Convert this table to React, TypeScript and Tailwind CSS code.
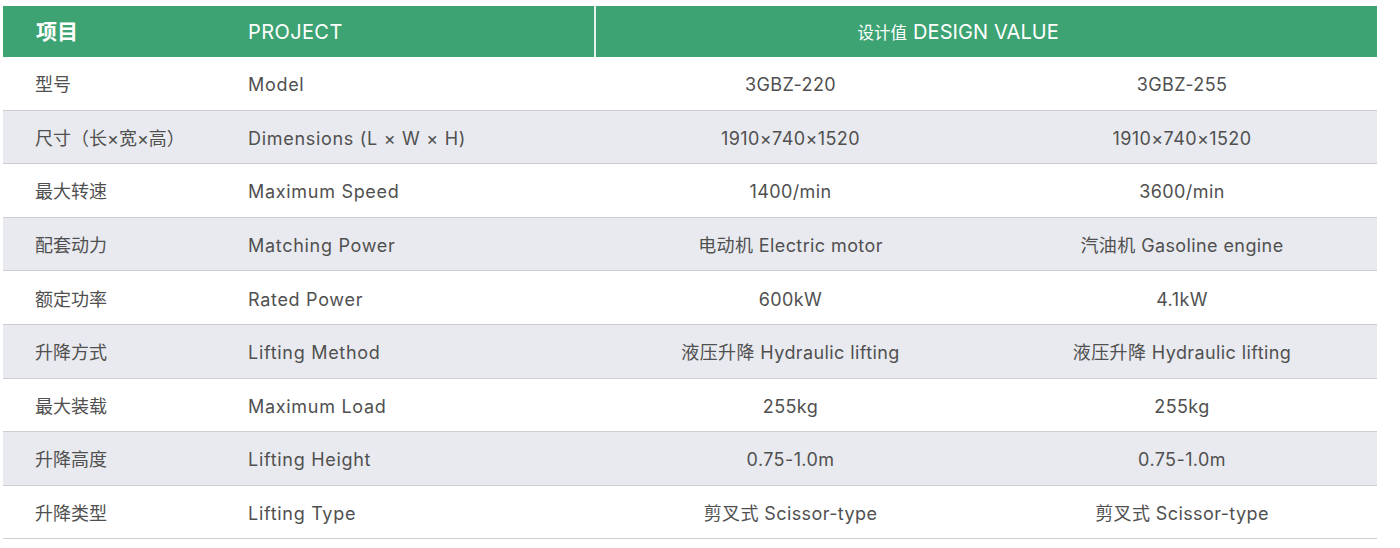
import React from "react";

const rows: [string, string, string, string][] = [
  ["型号", "Model", "3GBZ-220", "3GBZ-255"],
  ["尺寸（长×宽×高）", "Dimensions (L × W × H)", "1910×740×1520", "1910×740×1520"],
  ["最大转速", "Maximum Speed", "1400/min", "3600/min"],
  ["配套动力", "Matching Power", "电动机 Electric motor", "汽油机 Gasoline engine"],
  ["额定功率", "Rated Power", "600kW", "4.1kW"],
  ["升降方式", "Lifting Method", "液压升降 Hydraulic lifting", "液压升降 Hydraulic lifting"],
  ["最大装载", "Maximum Load", "255kg", "255kg"],
  ["升降高度", "Lifting Height", "0.75-1.0m", "0.75-1.0m"],
  ["升降类型", "Lifting Type", "剪叉式 Scissor-type", "剪叉式 Scissor-type"],
];

const font = { fontFamily: '"Inter", "Noto Sans CJK SC", sans-serif' };

export default function App() {
  return (
    <div className="w-[1400px] h-[548px] bg-white pt-[6px] pl-[3px]" style={font}>
      <div className="w-[1374px]">
        <div className="flex h-[51px] bg-[#3da372] text-white items-center">
          <div className="w-[213px] pl-[33px] text-[21px] font-bold">项目</div>
          <div className="w-[378px] pl-[32px] text-[20px] tracking-[0.4px]">PROJECT</div>
          <div className="w-[1.5px] self-stretch bg-[#e6f2ec]" />
          <div className="flex-1 pl-[262px] flex items-baseline">
            <span className="text-[16.5px]">设计值</span>
            <span className="text-[20px] ml-[6px] tracking-[0.1px]">DESIGN VALUE</span>
          </div>
        </div>
        {rows.map((r, i) => (
          <div
            key={i}
            className={`flex h-[53.6px] items-center pt-[3px] border-b border-[#cdcdd2] text-[18px] tracking-[0.4px] text-[#505050] ${i % 2 === 1 ? "bg-[#e9eaef]" : "bg-white"}`}
          >
            <div className="w-[213px] pl-[32px] tracking-normal">{r[0]}</div>
            <div className="w-[378px] pl-[32px] tracking-[0.7px]">{r[1]}</div>
            <div className="w-[393px] text-center">{r[2]}</div>
            <div className="flex-1 text-center">{r[3]}</div>
          </div>
        ))}
      </div>
    </div>
  );
}
